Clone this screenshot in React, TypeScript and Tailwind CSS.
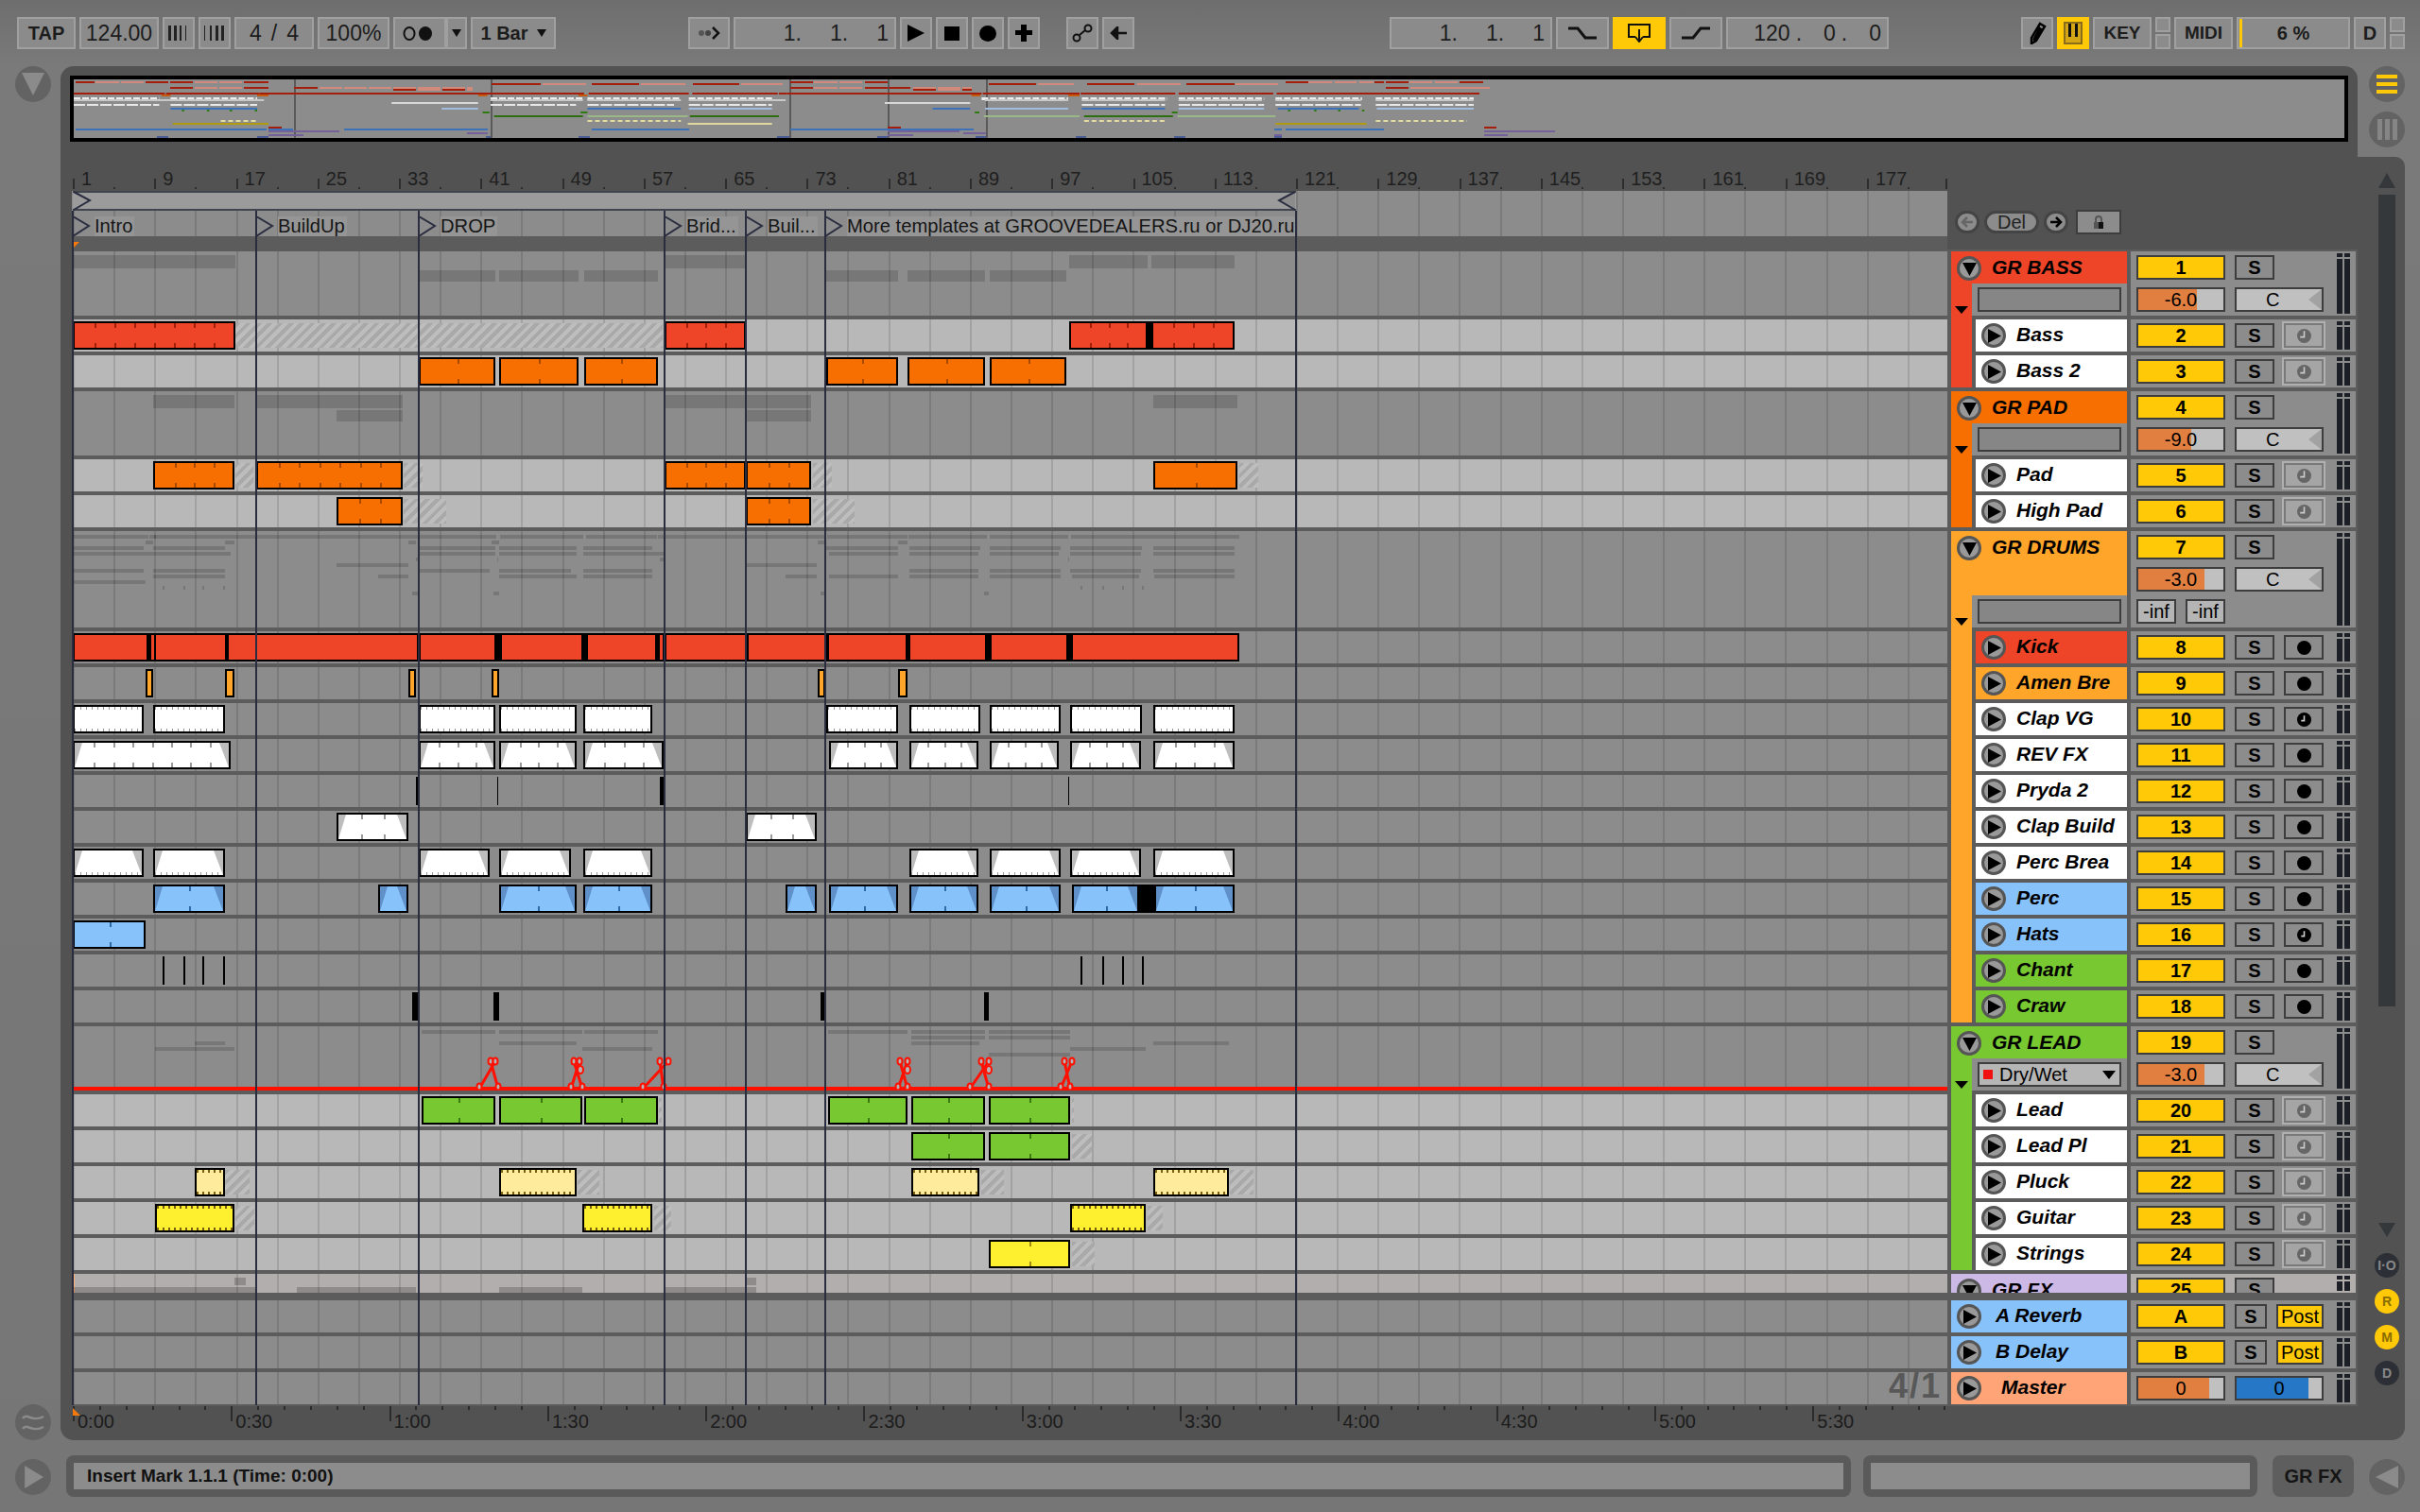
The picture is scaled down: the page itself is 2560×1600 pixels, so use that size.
import React from "react";

type Clip = [number, number, number?];
type Span = [number, number];
type Mon = "clock" | "rec" | "recClock";

type Track = {
  name: string;
  bg: string;
  num: number;
  mon: Mon;
  light?: boolean;
  clipBg: string;
  tick?: string;
  dense?: string;
  denseBoth?: boolean;
  fade?: string;
  clips: Clip[];
  under?: Span[];
  hatch?: Span[];
};

type Group = {
  name: string;
  bg: string;
  num: number;
  vol: string;
  fill: number;
  tall?: boolean;
  param?: string;
  tracks: Track[];
};

const GRID =
  "bg-[repeating-linear-gradient(90deg,transparent_0,transparent_1px,#0000001f_1px,#0000001f_3px,transparent_3px,transparent_43.13px)]";
const HATCH =
  "bg-[repeating-linear-gradient(135deg,#a9a9a9_0,#a9a9a9_4px,#bdbdbd_4px,#bdbdbd_8px)]";
const DENSE_GRAY =
  "bg-[repeating-linear-gradient(90deg,#999999_0,#999999_1px,transparent_1px,transparent_6px)]";
const DENSE_BROWN =
  "bg-[repeating-linear-gradient(90deg,#7a5f10_0,#7a5f10_2px,transparent_2px,transparent_6px)]";

const RED = "bg-[#ee4427]";
const ORANGE = "bg-[#f76f00]";
const AMBER = "bg-[#ffa529]";
const BLUE = "bg-[#88c2fb]";
const GREEN = "bg-[#78c832]";
const CREAM = "bg-[#ffeb9c]";
const YELLOW = "bg-[#fff02f]";
const WHITE = "bg-white";
const BLACK = "bg-black";

const GROUPS: Group[] = [
  {
    name: "GR BASS",
    bg: RED,
    num: 1,
    vol: "-6.0",
    fill: 62,
    tracks: [
      {
        name: "Bass", bg: WHITE, num: 2, mon: "clock", light: true, clipBg: RED, tick: "bg-[#a31f0a]",
        clips: [[77, 249, 8], [703, 789, 4], [1131, 1214, 4], [1218, 1306, 4]],
        under: [[1212, 1220]],
        hatch: [[249, 701]],
      },
      {
        name: "Bass 2", bg: WHITE, num: 3, mon: "clock", light: true, clipBg: ORANGE, tick: "bg-[#a84a00]",
        clips: [[443, 524, 2], [528, 612, 2], [618, 696, 2], [874, 950, 2], [960, 1042, 2], [1047, 1128, 2]],
      },
    ],
  },
  {
    name: "GR PAD",
    bg: ORANGE,
    num: 4,
    vol: "-9.0",
    fill: 56,
    tracks: [
      {
        name: "Pad", bg: WHITE, num: 5, mon: "clock", light: true, clipBg: ORANGE, tick: "bg-[#a84a00]",
        clips: [[162, 248, 4], [271, 426, 7], [703, 789, 4], [789, 858, 3], [1220, 1309, 2]],
        hatch: [[249, 268], [427, 447], [860, 880], [1311, 1331]],
      },
      {
        name: "High Pad", bg: WHITE, num: 6, mon: "clock", light: true, clipBg: ORANGE, tick: "bg-[#a84a00]",
        clips: [[356, 426, 3], [789, 858, 3]],
        hatch: [[427, 472], [860, 904]],
      },
    ],
  },
  {
    name: "GR DRUMS",
    bg: AMBER,
    num: 7,
    vol: "-3.0",
    fill: 70,
    tall: true,
    tracks: [
      {
        name: "Kick", bg: RED, num: 8, mon: "rec", clipBg: RED,
        under: [[77, 1311]],
        clips: [[77, 157], [158, 165], [163, 240], [240, 443], [443, 525], [529, 617], [620, 695], [696, 703], [703, 790], [790, 874], [875, 960], [961, 1044], [1047, 1130], [1133, 1311]],
      },
      {
        name: "Amen Bre", bg: AMBER, num: 9, mon: "rec", clipBg: AMBER,
        clips: [[154, 162], [238, 248], [432, 440], [520, 528], [865, 873], [950, 960]],
      },
      {
        name: "Clap VG", bg: WHITE, num: 10, mon: "recClock", clipBg: WHITE, dense: DENSE_GRAY, denseBoth: true,
        clips: [[77, 152], [162, 238], [443, 524], [528, 610], [617, 690], [874, 950], [962, 1037], [1047, 1122], [1132, 1208], [1220, 1306]],
      },
      {
        name: "REV FX", bg: WHITE, num: 11, mon: "rec", clipBg: WHITE, tick: "bg-[#9a9a9a]", fade: "fill-[#bdbdbd]",
        clips: [[77, 244, 8], [443, 524, 4], [528, 610, 4], [617, 702, 4], [877, 950, 4], [962, 1035, 4], [1047, 1120, 4], [1132, 1207, 4], [1220, 1306, 4]],
      },
      {
        name: "Pryda 2", bg: WHITE, num: 12, mon: "rec", clipBg: BLACK,
        clips: [[440, 443], [526, 527], [698, 702], [1130, 1131]],
      },
      {
        name: "Clap Build", bg: WHITE, num: 13, mon: "rec", clipBg: WHITE, tick: "bg-[#9a9a9a]", fade: "fill-[#bdbdbd]",
        clips: [[356, 432, 3], [789, 864, 3]],
      },
      {
        name: "Perc Brea", bg: WHITE, num: 14, mon: "rec", clipBg: WHITE, dense: DENSE_GRAY, fade: "fill-[#bdbdbd]",
        clips: [[77, 152], [162, 238], [443, 518], [528, 604], [617, 690], [962, 1035], [1047, 1122], [1132, 1207], [1220, 1306]],
      },
      {
        name: "Perc", bg: BLUE, num: 15, mon: "rec", clipBg: BLUE, tick: "bg-[#2e6aa8]", fade: "fill-[#5f90c8]",
        under: [[1205, 1222]],
        clips: [[162, 238, 2], [400, 432], [528, 610, 2], [617, 690, 2], [831, 864], [877, 950, 2], [962, 1035, 2], [1047, 1122, 2], [1134, 1205, 2], [1221, 1306, 2]],
      },
      {
        name: "Hats", bg: BLUE, num: 16, mon: "recClock", clipBg: BLUE, tick: "bg-[#2e6aa8]",
        clips: [[77, 154, 2]],
      },
      {
        name: "Chant", bg: GREEN, num: 17, mon: "rec", clipBg: BLACK,
        clips: [[172, 174], [194, 196], [214, 216], [236, 238], [1143, 1145], [1166, 1168], [1187, 1189], [1208, 1210]],
      },
      {
        name: "Craw", bg: GREEN, num: 18, mon: "rec", clipBg: BLACK,
        clips: [[436, 442], [522, 528], [868, 872], [1041, 1046]],
      },
    ],
  },
  {
    name: "GR LEAD",
    bg: GREEN,
    num: 19,
    vol: "-3.0",
    fill: 70,
    param: "Dry/Wet",
    tracks: [
      {
        name: "Lead", bg: WHITE, num: 20, mon: "clock", light: true, clipBg: GREEN, tick: "bg-[#3f7a10]",
        clips: [[446, 524, 2], [528, 616, 2], [618, 696, 2], [876, 960, 2], [964, 1042, 2], [1046, 1132, 2]],
        hatch: [[697, 700], [1134, 1136]],
      },
      {
        name: "Lead Pl", bg: WHITE, num: 21, mon: "clock", light: true, clipBg: GREEN, tick: "bg-[#3f7a10]",
        clips: [[964, 1042, 2], [1046, 1132, 2]],
        hatch: [[1134, 1155]],
      },
      {
        name: "Pluck", bg: WHITE, num: 22, mon: "clock", light: true, clipBg: CREAM, dense: DENSE_BROWN, denseBoth: true,
        clips: [[206, 238], [528, 610], [964, 1036], [1220, 1300]],
        hatch: [[238, 264], [611, 634], [1038, 1062], [1301, 1326]],
      },
      {
        name: "Guitar", bg: WHITE, num: 23, mon: "clock", light: true, clipBg: YELLOW, dense: DENSE_BROWN, denseBoth: true,
        clips: [[164, 248], [616, 690], [1132, 1212]],
        hatch: [[249, 269], [692, 710], [1214, 1230]],
      },
      {
        name: "Strings", bg: WHITE, num: 24, mon: "clock", light: true, clipBg: YELLOW, tick: "bg-[#a08a10]",
        clips: [[1046, 1132, 2]],
        hatch: [[1134, 1158]],
      },
    ],
  },
];

const LOCATORS = [77, 271, 443, 703, 789, 873, 1371];
const MARKERS: [number, string][] = [
  [77, "Intro"],
  [271, "BuildUp"],
  [443, "DROP"],
  [703, "Brid..."],
  [789, "Buil..."],
  [873, "More templates at GROOVEDEALERS.ru or DJ20.ru"],
];
const BAR_LABELS = Array.from({ length: 23 }, (_, i) => i * 8 + 1);
const TIME_LABELS = ["0:00", "0:30", "1:00", "1:30", "2:00", "2:30", "3:00", "3:30", "4:00", "4:30", "5:00", "5:30"];

const lx = (x: number) => x - 76;
const ox = (x: number) => 78 + (x - 77) * 1.205;

const trackBy = (name: string) =>
  GROUPS.flatMap((g) => g.tracks).find((t) => t.name === name) as Track;

const OV_D = "#a51e0c";
const OV_S = "#d18a7c";
const OV_BLUE = "#3e72b8";
const OV_PURPLE = "#74619a";

const OV_BARS: [number, number, string, Span[]][] = [
  [86, 2, OV_D, [[80, 100], [154, 178], [180, 204], [258, 284], [836, 860], [915, 939], [1360, 1384], [1454, 1464], [1466, 1490], [1544, 1569]]],
  [86, 2, OV_S, [[101, 126], [128, 152], [206, 230], [232, 256], [861, 886], [888, 912], [1384, 1409], [1412, 1435], [1438, 1453], [1491, 1515], [1518, 1542]]],
  [88, 2, OV_D, [[520, 572], [626, 676], [733, 782], [1046, 1096], [1150, 1200], [1255, 1306]]],
  [88, 2, OV_S, [[574, 620], [678, 725], [784, 828], [1098, 1136], [1203, 1249], [1307, 1352]]],
  [92, 2, OV_D, [[180, 204], [258, 284], [311, 336], [836, 860], [915, 939], [940, 963], [1466, 1490]]],
  [92, 2, OV_S, [[206, 230], [232, 256], [338, 362], [364, 388], [390, 414], [416, 440], [468, 492], [861, 886], [888, 912], [966, 990], [1018, 1028], [1492, 1576]]],
  [92, 4, OV_S, [[442, 466], [494, 500], [992, 1016]]],
  [94, 2, OV_D, [[416, 440], [468, 492], [966, 990], [1018, 1028]]],
  [134, 2, OV_D, [[284, 298], [939, 953], [1570, 1583]]],
  [136, 2, OV_BLUE, [[80, 282], [284, 310], [364, 516], [626, 729], [836, 1030], [1348, 1356], [1360, 1464]]],
  [138, 2, OV_PURPLE, [[284, 359], [939, 1015], [1570, 1645]]],
  [140, 2, OV_PURPLE, [[494, 516], [1019, 1043]]],
  [142, 2, OV_PURPLE, [[284, 321], [939, 966], [1348, 1356], [1570, 1595]]],
  [144, 2, "#4a5c94", [[166, 178], [272, 284], [514, 519], [612, 624], [822, 835], [928, 939], [1032, 1043], [1138, 1149], [1242, 1254], [1348, 1356]]],
];

// rows of the overview taken straight from the clips: track, y, height, colours, dash
const OV_ROWS: [string, number, number, string[], string?][] = [
  ["Kick", 98, 2, [OV_D]],
  ["Amen Bre", 100, 2, ["#c25a10"]],
  ["Clap VG", 103, 3, ["#eeeeee"], "7 2"],
  ["REV FX", 105, 2, ["#c8c8c8"]],
  ["Clap Build", 108, 2, ["#d8d8d8"]],
  ["Perc Brea", 110, 2, ["#e8e8e8"], "12 2"],
  ["Perc", 114, 2, [OV_BLUE, "#a0bde0"]],
  ["Chant", 116, 2, ["#2c7a10"]],
  ["Craw", 118, 2, ["#2c7a10"]],
  ["Lead", 122, 2, ["#2c6e10", "#9ab887"]],
  ["Pluck", 127, 2, ["#e4dba0"], "5 3"],
  ["Guitar", 130, 2, ["#b09a10", "#e0d8a0"]],
];

const Tri = ({ className, points = "0,0 10,0 5,10", w = 14, h = 14 }: { className?: string; points?: string; w?: number; h?: number }) => (
  <svg width={w} height={h} viewBox="0 0 10 10" preserveAspectRatio="none" className={className}>
    <polygon points={points} />
  </svg>
);

const Btn = ({ className = "", children }: { className?: string; children?: React.ReactNode }) => (
  <div className={`flex h-[34px] shrink-0 items-center justify-center border-2 border-[#a0a0a0] bg-[#8b8b8b] text-[#1c1c1c] ${className.includes("text-[") ? "" : "text-[23px]"} ${className}`}>
    {children}
  </div>
);

function Bars({ flip }: { flip?: boolean }) {
  const w = flip ? [1, 2, 3, 3] : [3, 3, 2, 1];
  return (
    <svg width="24" height="16" viewBox="0 0 24 16">
      {w.map((b, i) => (
        <rect key={i} x={i * 6 + 1} y="0" width={b} height="16" fill="#222" />
      ))}
    </svg>
  );
}

function Overview() {
  return (
    <div className="h-[70px] w-[2410px] bg-black p-[4px]">
      <svg width="2402" height="62" viewBox="78 84 2402 62" className="block bg-[#8c8c8c]">
        {[311, 519, 835, 939, 1043].map((x) => (
          <rect key={x} x={x} y="84" width="2" height="62" fill="#5a5a5a" />
        ))}
        {OV_BARS.map(([y, h, fill, spans]) =>
          spans.map(([a, b]) => <rect key={`${y}${fill}${a}`} x={a} y={y} width={b - a} height={h} fill={fill} />),
        )}
        {OV_ROWS.map(([name, y, h, colors, dash]) =>
          trackBy(name).clips.map(([a, b], i) => (
            <line
              key={`${name}${a}`}
              x1={ox(a)}
              x2={ox(b)}
              y1={y + h / 2}
              y2={y + h / 2}
              strokeWidth={h}
              stroke={colors[i % colors.length]}
              strokeDasharray={dash}
            />
          )),
        )}
      </svg>
    </div>
  );
}

function ClipBox({ clip, track }: { clip: Clip; track: Track }) {
  const [a, b, div = 1] = clip;
  const ticks = Array.from({ length: div - 1 }, (_, i) => ((i + 1) / div) * 100);
  return (
    <div
      className={`absolute top-[2px] h-[30px] overflow-hidden ${track.clipBg === BLACK ? "" : "border-2 border-black"} ${track.clipBg}`}
      style={{ left: lx(a), width: b - a }}
    >
      {track.fade && (
        <>
          <Tri className={`absolute left-0 top-0 h-full ${track.fade}`} points="0,0 10,0 0,10" w={8} />
          <Tri className={`absolute right-0 top-0 h-full ${track.fade}`} points="0,0 10,0 10,10" w={10} />
        </>
      )}
      {track.dense && track.denseBoth && <div className={`absolute inset-x-0 top-0 h-[3px] ${track.dense}`} />}
      {track.dense && <div className={`absolute inset-x-0 bottom-0 h-[3px] ${track.dense}`} />}
      {ticks.map((p) => (
        <React.Fragment key={p}>
          <div className={`absolute top-0 h-[5px] w-[2px] ${track.tick}`} style={{ left: `${p}%` }} />
          <div className={`absolute bottom-0 h-[5px] w-[2px] ${track.tick}`} style={{ left: `${p}%` }} />
        </React.Fragment>
      ))}
    </div>
  );
}

function Lane({ className = "", children }: { className?: string; children?: React.ReactNode }) {
  return <div className={`relative w-[1984px] shrink-0 ${GRID} ${className}`}>{children}</div>;
}

const Circle = ({ dir, className = "" }: { dir: "down" | "right"; className?: string }) => (
  <div className={`flex h-[26px] w-[26px] shrink-0 items-center justify-center rounded-full border-[3px] border-[#555555] bg-[#999999] ${className}`}>
    {dir === "down" ? (
      <Tri className="mt-[1px] fill-black" points="0,0 10,0 5,10" w={15} h={14} />
    ) : (
      <Tri className="ml-[2px] fill-black" points="0,0 10,5 0,10" w={14} h={15} />
    )}
  </div>
);

const NumBox = ({ children }: { children: React.ReactNode }) => (
  <div className="flex h-[26px] w-[94px] shrink-0 items-center justify-center border-2 border-[#3d3d3d] bg-[#ffc907] text-[20px] font-bold text-black">
    {children}
  </div>
);

const SBox = ({ w = "w-[42px]" }: { w?: string }) => (
  <div className={`flex h-[26px] shrink-0 items-center justify-center border-2 border-[#3d3d3d] bg-[#8c8c8c] text-[20px] font-bold text-black ${w}`}>S</div>
);

const Slider = ({ text, fill, color = "bg-[#e07f40]" }: { text: string; fill: number; color?: string }) => (
  <div className="relative flex h-[26px] w-[94px] shrink-0 items-center justify-center border-2 border-[#3d3d3d] bg-[#c0c0c0] text-[20px] text-black">
    <div className={`absolute inset-y-0 left-0 ${color}`} style={{ width: fill }} />
    <span className="relative">{text}</span>
  </div>
);

const PanBox = () => (
  <div className="relative flex h-[26px] w-[94px] shrink-0 items-center border-2 border-[#3d3d3d] bg-[#c0c0c0] pl-[31px] text-[20px] text-black">
    C
    <Tri className="absolute right-0 top-0 h-full fill-[#a2a2a2]" points="10,0 10,10 0,5" w={14} />
  </div>
);

const Meter = () => (
  <div className="absolute bottom-[2px] right-[6px] top-[2px] flex gap-[2px]">
    {[0, 1].map((i) => (
      <div key={i} className="flex w-[6px] flex-col gap-[2px]">
        <div className="h-[4px] bg-[#1c1f26]" />
        <div className="flex-1 bg-[#1c1f26]" />
      </div>
    ))}
  </div>
);

function Monitor({ mon }: { mon: Mon }) {
  if (mon === "clock") {
    return (
      <div className="-my-[2px] ml-[8px] border-2 border-[#b0b0b0]">
        <div className="flex h-[26px] w-[42px] items-center justify-center border-2 border-[#7a7a7a] bg-[#a5a5a5]">
          <svg width="15" height="15" viewBox="0 0 14 14">
            <circle cx="7" cy="7" r="7" fill="#666" />
            <path d="M7 2v6H3" fill="none" stroke="#ccc" strokeWidth="1.5" />
          </svg>
        </div>
      </div>
    );
  }
  return (
    <div className="ml-[10px] flex h-[26px] w-[42px] items-center justify-center border-2 border-[#3d3d3d] bg-[#8c8c8c]">
      <svg width="15" height="15" viewBox="0 0 14 14">
        <circle cx="7" cy="7" r="7" fill="#000" />
        {mon === "recClock" && <path d="M7 3v5H4" fill="none" stroke="#ccc" strokeWidth="1.5" />}
      </svg>
    </div>
  );
}

function GroupRow({ group }: { group: Group }) {
  const rows = group.tracks.length;
  const hRow = rows === 2 ? (i: number) => (i === 0 ? [4, 14] : [20, 12]) : (i: number) => [4 + i * 6, 4];
  return (
    <div className={`flex gap-1 ${group.tall ? "h-[102px]" : "h-[68px]"}`}>
      <Lane className="bg-[#8c8c8c]">
        {group.tracks.map((t, i) =>
          t.clips.map(([a, b]) => (
            <div
              key={`${t.name}${a}`}
              className="absolute bg-black/15"
              style={{ left: lx(a), width: b - a, top: hRow(i)[0], height: hRow(i)[1] }}
            />
          )),
        )}
        {group.param && <Automation />}
      </Lane>
      <div className="flex w-[186px] shrink-0 flex-col">
        <div className={`flex items-start gap-[11px] pl-[6px] pt-[5px] ${group.bg} ${group.tall ? "h-[68px]" : "h-[34px]"}`}>
          <Circle dir="down" />
          <span className="-mt-[4px] text-[21px] font-bold italic text-black">{group.name}</span>
        </div>
        <div className="flex h-[34px]">
          <div className={`flex h-[38px] w-[22px] shrink-0 justify-center pt-[24px] ${group.bg}`}>
            <Tri className="fill-black" points="0,0 10,0 5,10" w={14} h={8} />
          </div>
          <div className="flex-1 bg-[#8c8c8c] pl-[6px] pt-[4px]">
            {group.param ? (
              <div className="flex h-[26px] w-[152px] items-center border-2 border-[#3d3d3d] bg-[#b6b6b6] pl-[4px] pr-[4px] text-[20px] text-black">
                <span className="mr-[7px] h-[10px] w-[10px] bg-[#f01010]" />
                {group.param}
                <Tri className="ml-auto fill-black" points="0,0 10,0 5,10" w={14} h={9} />
              </div>
            ) : (
              <div className="h-[26px] w-[152px] border-2 border-[#3d3d3d] bg-[#868686]" />
            )}
          </div>
        </div>
      </div>
      <div className="relative flex w-[238px] shrink-0 flex-col gap-[8px] bg-[#8c8c8c] pl-[6px] pt-[4px]">
        <div className="flex gap-[10px]">
          <NumBox>{group.num}</NumBox>
          <SBox />
        </div>
        <div className="flex gap-[10px]">
          <Slider text={group.vol} fill={group.fill} />
          <PanBox />
        </div>
        {group.tall && (
          <div className="flex gap-[10px] text-[20px] text-black">
            {[0, 1].map((i) => (
              <div key={i} className="flex h-[26px] w-[42px] items-center justify-center border-2 border-[#3d3d3d] bg-[#b5b5b5]">-inf</div>
            ))}
          </div>
        )}
        <Meter />
      </div>
    </div>
  );
}

function TrackRow({ track, strip, last }: { track: Track; strip: string; last: boolean }) {
  return (
    <div className="flex h-[34px] gap-1">
      <Lane className={track.light ? "bg-[#b8b8b8]" : "bg-[#8c8c8c]"}>
        {track.hatch?.map(([a, b]) => (
          <div key={a} className={`absolute top-[4px] h-[26px] ${HATCH}`} style={{ left: lx(a), width: b - a }} />
        ))}
        {track.under?.map(([a, b]) => (
          <div key={a} className="absolute top-[2px] h-[30px] bg-black" style={{ left: lx(a), width: b - a }} />
        ))}
        {track.clips.map((c) => (
          <ClipBox key={c[0]} clip={c} track={track} />
        ))}
      </Lane>
      <div className="flex w-[186px] shrink-0">
        <div className={`w-[22px] shrink-0 ${strip} ${last ? "h-[34px]" : "h-[38px]"}`} />
        <div className={`ml-[4px] flex h-[34px] flex-1 items-center gap-[11px] pl-[6px] ${track.bg}`}>
          <Circle dir="right" />
          <span className="pb-[2px] text-[21px] font-bold italic text-black">{track.name}</span>
        </div>
      </div>
      <div className="relative flex w-[238px] shrink-0 items-start bg-[#8c8c8c] pl-[6px] pt-[4px]">
        <NumBox>{track.num}</NumBox>
        <div className="ml-[10px]">
          <SBox />
        </div>
        <Monitor mon={track.mon} />
        <Meter />
      </div>
    </div>
  );
}

function Automation() {
  const spikes: [number, number, number, number, number?][] = [
    [507, 519, 524, 527],
    [604, 607, 613, 616, 614],
    [680, 698, 707, 702],
    [950, 952, 960, 960, 960],
    [1026, 1038, 1046, 1046, 1046],
    [1122, 1126, 1134, 1132],
  ];
  return (
    <>
      <div className="absolute inset-x-0 bottom-0 h-[4px] bg-[#ff1000]" />
      <svg width="1984" height="68" viewBox="76 1086 1984 68" className="absolute left-0 top-0">
        {spikes.map(([a, b, c, d, m]) => (
          <g key={a} fill="#b5b5b5" stroke="#ff1000" strokeWidth="3">
            <path d={`M${a} 1152L${c} 1123M${b} 1123L${d} 1152`} fill="none" />
            {[a, d].map((x) => (
              <ellipse key={x} cx={x} cy="1150" rx="2.5" ry="3.5" strokeWidth="2" />
            ))}
            {[b, c].map((x) => (
              <ellipse key={x} cx={x} cy="1123" rx="2.5" ry="3.5" strokeWidth="2" />
            ))}
            {m && <ellipse cx={m} cy="1132" rx="3" ry="4" strokeWidth="2" />}
          </g>
        ))}
      </svg>
    </>
  );
}

function SendRow({ name, letter, indent }: { name: string; letter: string; indent: string }) {
  return (
    <div className="flex h-[34px] gap-1">
      <Lane className="bg-[#8c8c8c]" />
      <div className="flex w-[186px] shrink-0 items-center bg-[#88c2fb] pl-[6px]">
        <Circle dir="right" />
        <span className={`pb-[2px] text-[21px] font-bold italic text-black ${indent}`}>{name}</span>
      </div>
      <div className="relative flex w-[238px] shrink-0 items-start gap-[10px] bg-[#8c8c8c] pl-[6px] pt-[4px]">
        <NumBox>{letter}</NumBox>
        <SBox w="w-[34px]" />
        <div className="flex h-[26px] w-[50px] items-center justify-center border-2 border-[#3d3d3d] bg-[#ffc907] text-[20px] text-black">Post</div>
        <Meter />
      </div>
    </div>
  );
}

function GrFxRow() {
  const low: Span[] = [[77, 270], [314, 440], [528, 616], [704, 800]];
  const small: Span[] = [[248, 260], [790, 800]];
  return (
    <div className="flex h-[20px] gap-1 overflow-hidden">
      <Lane className="bg-[#b3aeae]">
        <div className="absolute bottom-0 left-[1px] top-0 w-[2px] bg-[#ffb070]" />
        {low.map(([a, b]) => (
          <div key={a} className="absolute bottom-0 h-[6px] bg-black/20" style={{ left: lx(a), width: b - a }} />
        ))}
        {small.map(([a, b]) => (
          <div key={a} className="absolute top-[4px] h-[8px] bg-black/20" style={{ left: lx(a), width: b - a }} />
        ))}
      </Lane>
      <div className="flex w-[186px] shrink-0 items-start gap-[11px] bg-[#cdb9e6] pl-[6px] pt-[5px]">
        <Circle dir="down" />
        <span className="-mt-[4px] text-[21px] font-bold italic text-black">GR FX</span>
      </div>
      <div className="relative flex w-[238px] shrink-0 items-start gap-[10px] bg-[#b3aeae] pl-[6px] pt-[4px]">
        <NumBox>25</NumBox>
        <SBox />
        <Meter />
      </div>
    </div>
  );
}

function Header() {
  return (
    <div className="flex h-[98px]">
      <div className="w-[1984px] shrink-0">
        <div className="relative h-[36px] text-[20px] leading-[23px] text-[#1f1f1f]">
          {BAR_LABELS.map((n, i) => {
            const x = 1 + i * 86.27;
            return (
              <React.Fragment key={n}>
                <div className="absolute top-[23px] h-[11px] w-[2px] bg-[#2e2e2e]" style={{ left: x }} />
                <div className="absolute top-[32px] h-[2px] w-[2px] bg-[#2e2e2e]" style={{ left: x + 43 }} />
                <span className="absolute top-[12px]" style={{ left: x + 9 }}>{n}</span>
              </React.Fragment>
            );
          })}
          <div className="absolute right-0 top-[23px] h-[11px] w-[2px] bg-[#2e2e2e]" />
        </div>
        <Lane className="h-[48px] bg-[#8c8c8c]">
          <div className="absolute left-[1px] top-0 h-[21px] w-[1294px] border-y-2 border-[#40444f] bg-[#9b9b9b]" />
          <svg width="20" height="21" viewBox="0 0 20 21" className="absolute left-[1px] top-0">
            <path d="M1 1L18 10L1 20" fill="none" stroke="#2a2d3f" strokeWidth="2" />
          </svg>
          <svg width="20" height="21" viewBox="0 0 20 21" className="absolute left-[1275px] top-0">
            <path d="M19 1L2 10L19 20" fill="#8c8c8c" stroke="#2a2d3f" strokeWidth="2" />
          </svg>
          {MARKERS.map(([x, label]) => (
            <div key={x} className="absolute top-[27px] flex h-[21px] items-center" style={{ left: lx(x) - 1 }}>
              <svg width="21" height="21" viewBox="0 0 21 21">
                <path d="M1 0L18 10L1 21" fill="none" stroke="#2a2d3f" strokeWidth="2" />
              </svg>
              <span className="ml-[3px] whitespace-nowrap bg-[#959595] pr-[2px] text-[20.2px] leading-[21px] text-[#151515]">{label}</span>
            </div>
          ))}
        </Lane>
        <div className="relative h-[14px] bg-[#5c5c5c]">
          <Tri className="absolute left-[1px] top-[6px] fill-[#f5780a]" points="0,0 10,0 0,10" w={7} h={7} />
        </div>
      </div>
      <div className="flex items-start pl-[8px] pt-[57px]">
        <div className="flex h-[24px] w-[26px] items-center justify-center rounded-full border-[3px] border-[#444444] bg-[#8c8c8c]">
          <svg width="14" height="12" viewBox="0 0 14 12"><path d="M13 6H3M7 1L2 6l5 5" fill="none" stroke="#666" strokeWidth="2.5" /></svg>
        </div>
        <div className="ml-[5px] flex h-[24px] w-[58px] items-center justify-center rounded-full border-[3px] border-[#444444] bg-[#8c8c8c] text-[20px] text-[#222222]">Del</div>
        <div className="ml-[5px] flex h-[24px] w-[26px] items-center justify-center rounded-full border-[3px] border-[#444444] bg-[#8c8c8c]">
          <svg width="14" height="12" viewBox="0 0 14 12"><path d="M1 6h10M7 1l5 5-5 5" fill="none" stroke="#000" strokeWidth="2.5" /></svg>
        </div>
        <div className="-mt-[1px] ml-[8px] flex h-[26px] w-[48px] items-center justify-center border-2 border-[#3d3d3d] bg-[#8c8c8c]">
          <svg width="12" height="14" viewBox="0 0 12 14">
            <path d="M3 7V4a3 3 0 016 0v3" fill="none" stroke="#555" strokeWidth="2" />
            <rect x="1" y="7" width="10" height="7" fill="#555" />
            <rect x="6" y="7" width="5" height="7" fill="#111" />
          </svg>
        </div>
      </div>
    </div>
  );
}

function TimeRuler() {
  const ticks = Array.from({ length: 72 }, (_, i) => i);
  return (
    <div className="relative h-[34px] w-[1984px] text-[20px] leading-[23px] text-[#1c1c1c]">
      {ticks.map((i) => (
        <div
          key={i}
          className={`absolute top-0 w-[2px] bg-[#2b2b2b] ${i % 6 === 0 ? "h-[16px]" : "h-[4px]"}`}
          style={{ left: 1 + i * 27.88 }}
        />
      ))}
      {TIME_LABELS.map((t, i) => (
        <span key={t} className="absolute top-[5px]" style={{ left: 6 + i * 167.3 }}>{t}</span>
      ))}
      <Tri className="absolute left-[1px] top-[2px] fill-[#f5780a]" points="0,10 10,10 0,0" w={8} h={8} />
    </div>
  );
}

const Oval = ({ className = "", children }: { className?: string; children?: React.ReactNode }) => (
  <div className={`flex h-[38px] w-[38px] shrink-0 items-center justify-center rounded-[50%] bg-[#636363] ${className}`}>{children}</div>
);

const RoundTag = ({ className, children }: { className: string; children: React.ReactNode }) => (
  <div className={`flex h-[26px] w-[26px] items-center justify-center rounded-full text-[14px] font-bold ${className}`}>{children}</div>
);

export default function App() {
  return (
    <div className="flex h-[1600px] w-[2560px] flex-col overflow-hidden bg-[linear-gradient(180deg,#6e6e6e_0,#7a7a7a_70px,#767676_100%)] font-['Liberation_Sans',Arial,sans-serif]">
      <div className="flex h-[70px] items-start gap-1 pl-[18px] pt-[18px]">
        <Btn className="w-[62px] text-[20px] font-bold">TAP</Btn>
        <Btn className="w-[84px]">124.00</Btn>
        <Btn className="w-[34px]"><Bars /></Btn>
        <Btn className="w-[34px]"><Bars flip /></Btn>
        <Btn className="w-[84px] gap-[10px]"><span>4</span><span>/</span><span>4</span></Btn>
        <Btn className="w-[76px]">100%</Btn>
        <div className="flex">
          <Btn className="w-[56px]">
            <svg width="36" height="15" viewBox="0 0 36 15">
              <ellipse cx="7" cy="7.5" rx="5.5" ry="6.5" fill="none" stroke="#111" strokeWidth="2" />
              <ellipse cx="24" cy="7.5" rx="7" ry="7.5" fill="#111" />
            </svg>
          </Btn>
          <Btn className="w-[22px]">
            <Tri className="fill-[#111]" points="0,0 10,0 5,10" w={10} h={8} />
          </Btn>
        </div>
        <Btn className="w-[90px] gap-[9px] text-[20px] font-bold">
          <span>1 Bar</span>
          <Tri className="fill-[#111]" points="0,0 10,0 5,10" w={10} h={8} />
        </Btn>
        <Btn className="ml-[136px] w-[44px] gap-[3px]">
          <svg width="24" height="14" viewBox="0 0 24 14">
            <circle cx="4" cy="7" r="3" fill="#555" />
            <circle cx="11" cy="7" r="3" fill="#444" />
            <path d="M16 1l6 6-6 6" fill="none" stroke="#111" strokeWidth="2.5" />
          </svg>
        </Btn>
        <Btn className="w-[172px] !justify-end gap-[30px] pr-[6px]"><span>1.</span><span>1.</span><span>1</span></Btn>
        <Btn className="w-[34px]"><Tri className="fill-black" points="0,0 10,5 0,10" w={18} h={18} /></Btn>
        <Btn className="w-[34px]"><div className="h-[15px] w-[16px] bg-black" /></Btn>
        <Btn className="w-[34px]"><div className="h-[17px] w-[18px] rounded-[50%] bg-black" /></Btn>
        <Btn className="w-[34px]">
          <svg width="18" height="18" viewBox="0 0 18 18"><path d="M6 0h6v6h6v5h-6v7H6v-7H0V6h6z" fill="#000" /></svg>
        </Btn>
        <Btn className="ml-[24px] w-[34px]">
          <svg width="22" height="20" viewBox="0 0 22 20" fill="none" stroke="#111" strokeWidth="2">
            <circle cx="5" cy="15" r="3.5" />
            <circle cx="17" cy="5" r="3.5" />
            <path d="M8 12l6-5" />
          </svg>
        </Btn>
        <Btn className="w-[34px]">
          <svg width="18" height="14" viewBox="0 0 18 14"><path d="M18 7H5M8 1L2 7l6 6z" fill="#111" stroke="#111" strokeWidth="2.5" /></svg>
        </Btn>
        <Btn className="ml-[266px] w-[172px] !justify-end gap-[30px] pr-[6px]"><span>1.</span><span>1.</span><span>1</span></Btn>
        <Btn className="w-[56px]">
          <svg width="30" height="14" viewBox="0 0 30 14" fill="none" stroke="#111" strokeWidth="3"><path d="M0 2h10l8 10h12" /></svg>
        </Btn>
        <Btn className="w-[56px] !border-[#ffc907] bg-[#ffc907]">
          <svg width="24" height="20" viewBox="0 0 24 20" fill="none" stroke="#111" strokeWidth="2">
            <path d="M8 14H1V1h22v13h-7" />
            <path d="M12 6v12M8 14l4 5 4-5" />
          </svg>
        </Btn>
        <Btn className="w-[56px]">
          <svg width="30" height="14" viewBox="0 0 30 14" fill="none" stroke="#111" strokeWidth="3"><path d="M0 12h12l8-10h10" /></svg>
        </Btn>
        <Btn className="w-[172px] !justify-end pr-[6px]">
          <span>120</span><span className="ml-[6px]">.</span><span className="ml-[23px]">0</span><span className="ml-[6px]">.</span><span className="ml-[23px]">0</span>
        </Btn>
        <Btn className="ml-[136px] w-[34px]">
          <svg width="20" height="24" viewBox="0 0 20 24" fill="none" stroke="#000" strokeWidth="2.5">
            <path d="M13 2l5 3-9 15-5 3 0-6z" />
            <path d="M12 5l4 3-8 13-3-2z" fill="#000" stroke="none" />
          </svg>
        </Btn>
        <Btn className="w-[34px] !border-[#ffc907] bg-[#ffc907]">
          <svg width="20" height="24" viewBox="0 0 20 24">
            <rect x="0" y="0" width="20" height="24" fill="#8a6d1a" />
            <rect x="2" y="2" width="16" height="20" fill="#d4a514" />
            <rect x="5" y="2" width="3" height="14" fill="#111" />
            <rect x="12" y="2" width="3" height="14" fill="#111" />
          </svg>
        </Btn>
        <Btn className="w-[62px] text-[19px] font-bold">KEY</Btn>
        <div className="flex h-[34px] w-[16px] shrink-0 flex-col gap-[2px]">
          <Btn className="!h-[16px] w-[16px]" />
          <Btn className="!h-[16px] w-[16px]" />
        </div>
        <Btn className="w-[62px] text-[19px] font-bold">MIDI</Btn>
        <Btn className="relative w-[120px] text-[20px] font-bold">
          <div className="absolute inset-y-0 left-[1px] w-[3px] bg-[#ffc907]" />
          6 %
        </Btn>
        <Btn className="w-[34px] text-[20px] font-bold">D</Btn>
        <div className="flex h-[34px] w-[16px] shrink-0 flex-col gap-[2px]">
          <Btn className="!h-[16px] w-[16px]" />
          <Btn className="!h-[16px] w-[16px]" />
        </div>
      </div>

      <div className="flex h-[1454px]">
        <div className="flex w-[64px] shrink-0 flex-col justify-between pl-[16px]">
          <Oval>
            <Tri className="fill-[#8b8b8b]" points="0,0 10,0 5,10" w={24} h={24} />
          </Oval>
          <Oval>
            <svg width="24" height="24" viewBox="0 0 24 24" fill="none" stroke="#8b8b8b" strokeWidth="2.5">
              <path d="M1 8c5-7 9 5 22-2M1 19c5-7 9 5 22-2" />
            </svg>
          </Oval>
        </div>

        <div className="flex w-[2480px] flex-col">
          <div className="flex h-[96px]">
            <div className="h-[96px] w-[2430px] rounded-t-[14px] bg-[#525252] pl-[10px] pt-[10px]">
              <Overview />
            </div>
            <div className="ml-[12px] flex flex-col gap-[10px]">
              <Oval className="flex-col gap-[4px] bg-[#5c5c5c]">
                <div className="h-[4px] w-[22px] bg-[#ffc907]" />
                <div className="h-[4px] w-[22px] bg-[#ffc907]" />
                <div className="h-[4px] w-[22px] bg-[#ffc907]" />
              </Oval>
              <Oval className="gap-[3px] bg-[#5c5c5c]">
                <div className="h-[22px] w-[5px] bg-[#858585]" />
                <div className="h-[22px] w-[5px] bg-[#858585]" />
                <div className="h-[22px] w-[5px] bg-[#858585]" />
              </Oval>
            </div>
          </div>

          <div className="flex h-[1358px] rounded-b-[14px] rounded-tr-[10px] bg-[#525252] pl-[12px]">
            <div className="relative w-[2418px] shrink-0">
              <Header />
              <div className="flex flex-col gap-1 bg-[#5c5c5c] py-[2px]">
                {GROUPS.map((g) => (
                  <React.Fragment key={g.name}>
                    <GroupRow group={g} />
                    {g.tracks.map((t, i) => (
                      <TrackRow key={t.name} track={t} strip={g.bg} last={i === g.tracks.length - 1} />
                    ))}
                  </React.Fragment>
                ))}
                <GrFxRow />
                <div className="h-0" />
                <SendRow name="A Reverb" letter="A" indent="ml-[15px]" />
                <SendRow name="B Delay" letter="B" indent="ml-[15px]" />
                <div className="flex h-[34px] gap-1">
                  <Lane className="bg-[#8c8c8c]">
                    <span className="absolute bottom-[1px] right-[6px] text-[36px] font-bold leading-[36px] tracking-[2px] text-[#585858]">4/1</span>
                  </Lane>
                  <div className="flex w-[186px] shrink-0 items-center bg-[#ffa477] pl-[6px]">
                    <Circle dir="right" />
                    <span className="ml-[21px] pb-[2px] text-[21px] font-bold italic text-black">Master</span>
                  </div>
                  <div className="relative flex w-[238px] shrink-0 items-start gap-[10px] bg-[#8c8c8c] pl-[6px] pt-[4px]">
                    <Slider text="0" fill={75} />
                    <Slider text="0" fill={76} color="bg-[#2678c6]" />
                    <Meter />
                  </div>
                </div>
              </div>
              <TimeRuler />
              <div className="pointer-events-none absolute left-0 top-[57px] h-[1264px] w-[1984px]">
                {LOCATORS.map((x) => (
                  <div key={x} className="absolute inset-y-0 w-[2px] bg-[#2a2d3f]" style={{ left: lx(x) - 1 }} />
                ))}
              </div>
            </div>

            <div className="flex w-[50px] shrink-0 flex-col items-start pl-[22px] pt-[17px]">
              <Tri className="fill-[#34383a]" points="5,0 10,10 0,10" w={18} h={16} />
              <div className="mt-[7px] h-[859px] w-[18px] bg-[#34383a]" />
              <Tri className="mt-[229px] fill-[#34383a]" points="0,0 10,0 5,10" w={18} h={15} />
              <div className="-ml-[4px] mt-[17px] flex flex-col gap-[12px]">
                <RoundTag className="bg-[#2c3036] text-[#888888]">I·O</RoundTag>
                <RoundTag className="bg-[#ffc907] text-[#8a6d00]">R</RoundTag>
                <RoundTag className="bg-[#ffc907] text-[#8a6d00]">M</RoundTag>
                <RoundTag className="bg-[#2c3036] text-[#888888]">D</RoundTag>
              </div>
            </div>
          </div>
        </div>
      </div>

      <div className="mt-[16px] flex items-start pl-[16px]">
        <Oval className="mt-[4px]">
          <Tri className="fill-[#8b8b8b]" points="1,0 10,5 1,10" w={22} h={24} />
        </Oval>
        <div className="ml-[16px] h-[44px] w-[1888px] rounded-[8px] bg-[#5a5a5a] px-[8px] py-[8px]">
          <div className="flex h-[28px] items-center bg-[#8c8c8c] pl-[14px] text-[19px] font-bold text-[#111111]">Insert Mark 1.1.1 (Time: 0:00)</div>
        </div>
        <div className="ml-[13px] h-[44px] w-[417px] rounded-[8px] bg-[#5a5a5a] px-[8px] py-[8px]">
          <div className="h-[28px] bg-[#8c8c8c]" />
        </div>
        <div className="ml-[16px] flex h-[44px] w-[86px] items-center justify-center rounded-[8px] bg-[#5e5e5e] text-[20px] font-bold text-[#151515]">GR FX</div>
        <Oval className="ml-[16px] mt-[4px]">
          <Tri className="fill-[#8b8b8b]" points="10,0 0,5 10,10" w={24} h={24} />
        </Oval>
      </div>
    </div>
  );
}
